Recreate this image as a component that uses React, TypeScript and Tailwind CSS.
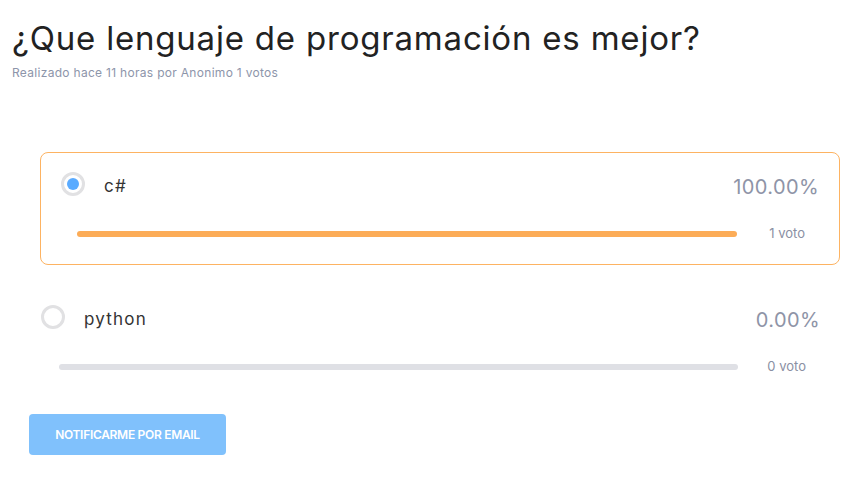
import React from "react";

type Option = {
  label: string;
  percent: string;
  votes: string;
  selected: boolean;
};

const options: Option[] = [
  { label: "c#", percent: "100.00%", votes: "1 voto", selected: true },
  { label: "python", percent: "0.00%", votes: "0 voto", selected: false },
];

function Radio({ checked }: { checked: boolean }) {
  return (
    <span className="flex h-6 w-6 shrink-0 items-center justify-center rounded-full border-[3px] border-[#e1e1e3] bg-white">
      {checked && <span className="h-3 w-3 rounded-full bg-[#5aabff]" />}
    </span>
  );
}

function PollOption({ option }: { option: Option }) {
  return (
    <div
      className={
        option.selected
          ? "ml-5 rounded-lg border-[1.5px] border-[#fdb362] px-5 pb-5 pt-[19px]"
          : "mr-[-1px] rounded-lg border-[1.5px] border-transparent px-5 pb-5 pt-[19px]"
      }
    >
      <div className="flex h-6 items-center">
        <Radio checked={option.selected} />
        <span className="ml-[19px] mt-[5px] text-[17px] tracking-[1.2px] text-[#333]">
          {option.label}
        </span>
        <span className="ml-auto mt-[5px] text-[20px] tracking-[0.4px] text-[#8e94a7]">
          {option.percent}
        </span>
      </div>
      <div className="mt-[28px] flex h-5 items-center">
        <div
          className={
            option.selected
              ? "ml-[16px] h-[6px] flex-1 rounded-full bg-[#fcac57]"
              : "ml-[18px] h-[6px] flex-1 rounded-full bg-[#dfe0e5]"
          }
        />
        <span className="w-[82px] pr-[14px] text-right text-[13px] text-[#8a90a3]">
          {option.votes}
        </span>
      </div>
    </div>
  );
}

export default function App() {
  return (
    <div className="h-[482px] w-[846px] bg-white px-3 pt-[18px] font-['Inter',sans-serif]">
      <h1 className="text-[33px] leading-[40px] tracking-[0.8px] text-[#222]">
        ¿Que lenguaje de programación es mejor?
      </h1>
      <p className="mt-[6px] text-[12px] tracking-[0.3px] text-[#8d95aa]">
        Realizado hace 11 horas por Anonimo 1 votos
      </p>

      <div className="mr-[-6px] mt-[70px] flex flex-col gap-5 pl-2">
        {options.map((option) => (
          <PollOption key={option.label} option={option} />
        ))}
      </div>

      <button className="ml-[17px] mt-[16px] h-[41px] w-[197px] rounded-[4px] bg-[#80c1fc] text-[12px] font-semibold uppercase tracking-[-0.3px] text-white">
        Notificarme por email
      </button>
    </div>
  );
}
